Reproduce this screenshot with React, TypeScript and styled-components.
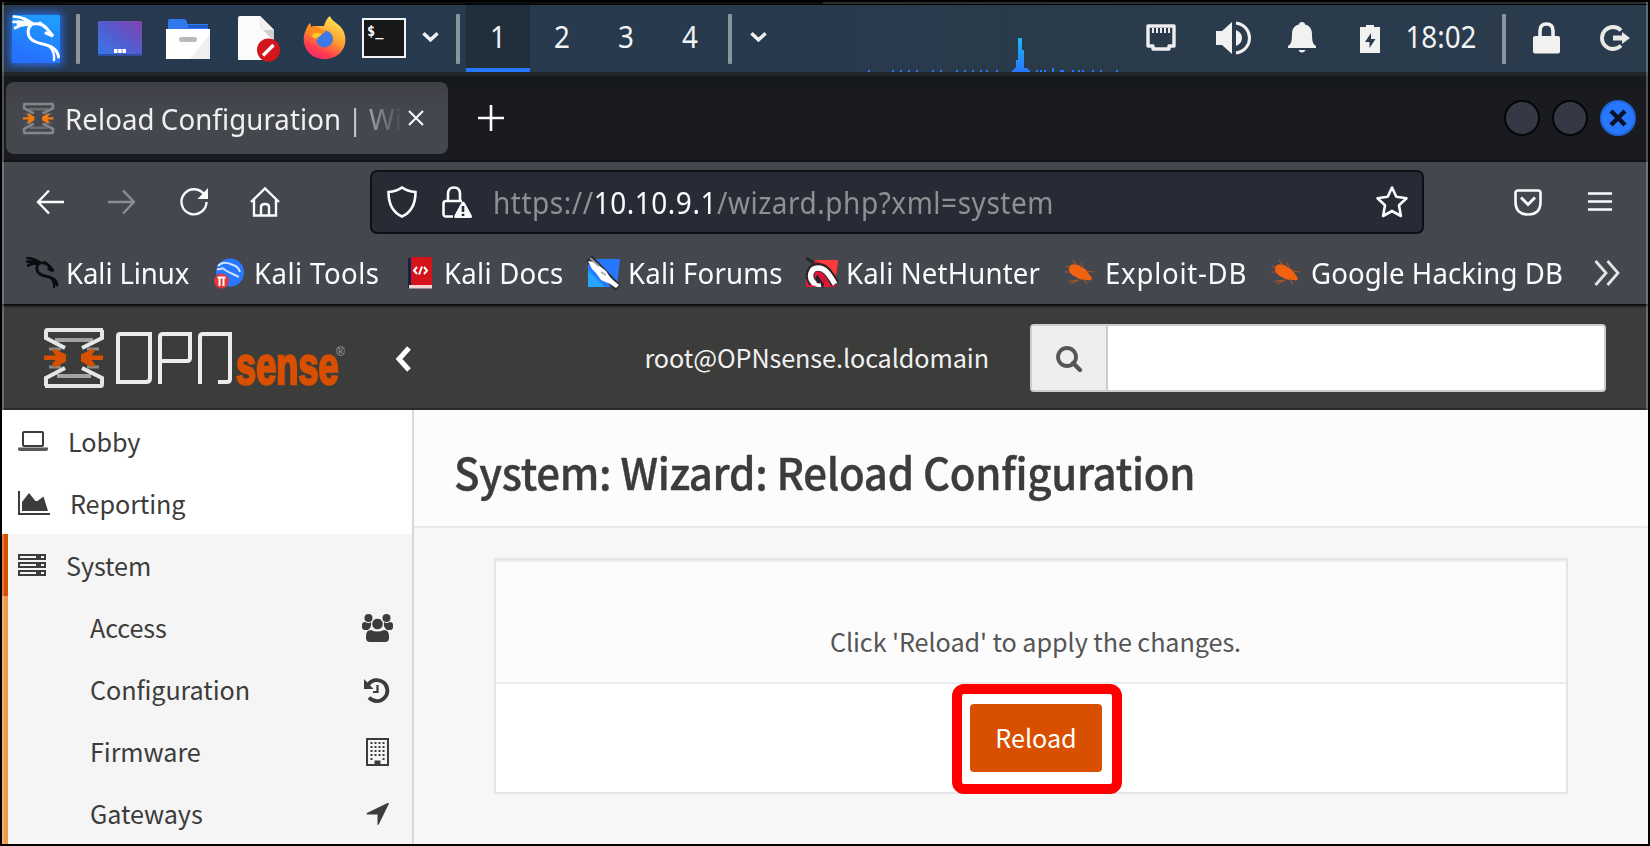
import React from "react";
import styled, { createGlobalStyle } from "styled-components";

const ui = '"Noto Sans", "Open Sans", sans-serif';
const page = '"Noto Sans CJK SC", "Noto Sans", sans-serif';

const Global = createGlobalStyle`
  * { box-sizing: border-box; }
  body { margin: 0; background: #000; overflow: hidden; }
  svg { display: block; flex: none; overflow: visible; }
`;

const Screen = styled.div`
  position: relative;
  width: 1650px;
  height: 846px;
  padding: 2px;
  background: #000;
  display: flex;
  flex-direction: column;
  font-family: ${ui};
`;
const WindowEdges = styled.div`
  position: absolute;
  inset: 2px 2px 2px 2px;
  border: solid rgba(255, 255, 255, 0.24);
  border-width: 0 2px;
  pointer-events: none;
`;
const TopEdge = styled.div`
  height: 2px;
  margin-bottom: 1px;
  flex: none;
  background: linear-gradient(90deg, #0c0d0f 821px, #2b2e30 821px);
`;

/* ---------- desktop panel ---------- */
const Panel = styled.div`
  height: 67px;
  flex: none;
  display: flex;
  align-items: center;
  padding: 0 18px 0 10px;
  background: linear-gradient(90deg, #27394e 0, #273a4e 700px, #293b4b 1000px, #2a3b4d 1646px);
`;
const Slot = styled.div<{ $before: number; $w: number; $lift?: number }>`
  flex: none;
  margin-left: ${(p) => p.$before}px;
  padding-bottom: ${(p) => p.$lift ?? 0}px;
  width: ${(p) => p.$w}px;
  display: flex;
  justify-content: center;
`;
const Divider = styled.i<{ $before: number }>`
  flex: none;
  margin-left: ${(p) => p.$before}px;
  width: 4px;
  height: 50px;
  border-radius: 1px;
  background: #8b959e;
`;
const MenuTile = styled.div`
  width: 48px;
  height: 48px;
  background: linear-gradient(20deg, #2672ff 20%, #1f9dff 90%);
  box-shadow: 0 0 8px 2px #2a6ff0;
`;
const Workspaces = styled.div`
  display: flex;
  flex: none;
  margin-left: 6px;
`;
const Workspace = styled.div<{ $active?: boolean }>`
  flex: none;
  width: 64px;
  height: 67px;
  display: flex;
  align-items: center;
  justify-content: center;
  background: ${(p) => (p.$active ? "#212f3d" : "transparent")};
  box-shadow: ${(p) => (p.$active ? "inset 0 -4px #2777ff" : "none")};
`;
const PanelText = styled.span`
  font-size: 27.8px;
  line-height: 60px;
  color: #f2f3f4;
  white-space: nowrap;
  transform: translateY(-3px) scaleY(1.08);
`;

/* ---------- browser chrome ---------- */
const TabStrip = styled.div`
  height: 90px;
  flex: none;
  display: flex;
  align-items: center;
  padding: 0 12px 2px 4px;
  border-top: 4px solid #212429;
  background: linear-gradient(#15181c, #1a1b20 30%, #1a1b20);
  box-shadow: inset 0 -2px #111216;
`;
const Tab = styled.div`
  width: 442px;
  height: 72px;
  padding-left: 17px;
  display: flex;
  align-items: center;
  border-radius: 8px;
  background: linear-gradient(#3f4046, #45474e 40%);
`;
const TabTitle = styled.span`
  width: 343px;
  margin-left: 11px;
  overflow: hidden;
  white-space: nowrap;
  font-size: 27.6px;
  line-height: 60px;
  letter-spacing: 0.1px;
  word-spacing: -1px;
  color: #f0f0f1;
  transform: scaleY(1.08);
  mask-image: linear-gradient(90deg, #000 275px, transparent 338px);
`;
const Spacer = styled.div`
  flex: 1;
`;
const WindowDot = styled.div<{ $close?: boolean }>`
  flex: none;
  width: 36px;
  height: 36px;
  margin-left: 12px;
  border-radius: 50%;
  display: flex;
  align-items: center;
  justify-content: center;
  border: 2px solid ${(p) => (p.$close ? "#2065d8" : "#050608")};
  background: ${(p) => (p.$close ? "#2777ff" : "#363845")};
`;
const NavBar = styled.div`
  height: 80px;
  flex: none;
  display: flex;
  align-items: center;
  padding-left: 2px;
  background: #44474e;
`;
const UrlBar = styled.div`
  width: 1054px;
  height: 64px;
  margin-left: 90px;
  padding: 0 14px 0 15px;
  display: flex;
  align-items: center;
  border: 2px solid #0e0f13;
  border-radius: 7px;
  background: #282a35;
`;
const Url = styled.span`
  margin-left: 21px;
  font-size: 28px;
  line-height: 56px;
  letter-spacing: 0.52px;
  color: #8f9093;
  white-space: nowrap;
  transform: scaleY(1.08);
  b { font-weight: 400; color: #fbfbfe; }
`;
const Bookmarks = styled.div`
  height: 64px;
  flex: none;
  display: flex;
  align-items: center;
  padding: 0 0 2px 24px;
  background: #44474e;
  border-bottom: 2px solid #0f1013;
`;
const Bookmark = styled.div<{ $w: number }>`
  flex: none;
  width: ${(p) => p.$w}px;
  display: flex;
  align-items: center;
`;
const BookmarkIcon = styled.div<{ $w: number }>`
  flex: none;
  width: ${(p) => p.$w}px;
  padding-top: 2px;
`;
const BookmarkText = styled.span<{ $ls?: number }>`
  font-size: 27.6px;
  line-height: 50px;
  letter-spacing: ${(p) => p.$ls ?? 0}px;
  color: #fbfbfe;
  white-space: nowrap;
  transform: scaleY(1.08);
`;

/* ---------- OPNsense page ---------- */
const Site = styled.div`
  flex: 1;
  min-height: 0;
  display: flex;
  flex-direction: column;
  background: #f7f7f7;
  font-family: ${page};
  color: #3c3c3b;
`;
const SiteHeader = styled.header`
  height: 104px;
  flex: none;
  display: flex;
  align-items: center;
  padding: 0 42px 0 42px;
  background: #3c3c3b;
  border-top: 2px solid #2f2f2f;
  border-bottom: 2px solid #2b2a2b;
`;
const Brand = styled.div`
  display: flex;
  align-items: flex-end;
  height: 60px;
`;
const BrandWord = styled.span`
  width: 100px;
  height: 60px;
  margin-left: 4px;
  font: 700 51px/77px "Liberation Sans", sans-serif;
  color: #d94f00;
  -webkit-text-stroke: 2.6px #d94f00;
  transform: scaleX(0.71);
  transform-origin: left;
`;
const Registered = styled.span`
  align-self: flex-start;
  width: 10px;
  margin: 18px 0 0 0;
  font: 12px/12px "Liberation Sans", sans-serif;
  color: #a5a5a4;
`;
const UserName = styled.span`
  font-size: 25.2px;
  line-height: 40px;
  margin-bottom: 2px;
  letter-spacing: -0.08px;
  color: #f1f1f1;
  white-space: nowrap;
`;
const Search = styled.div`
  width: 576px;
  height: 68px;
  margin-left: 41px;
  display: flex;
  border: 2px solid #ccc;
  border-radius: 4px;
  background: #fff;
`;
const SearchAddon = styled.div`
  width: 76px;
  display: flex;
  align-items: center;
  justify-content: center;
  padding-top: 2px;
  background: #eee;
  border-right: 2px solid #ccc;
`;
const Body = styled.div`
  flex: 1;
  min-height: 0;
  display: flex;
`;
const Sidebar = styled.nav`
  width: 412px;
  flex: none;
  background: #fff;
  border-right: 2px solid #d9d9d9;
  overflow: hidden;
`;
const MenuItem = styled.div<{ $state?: "open" | "sub"; $gap?: number }>`
  height: 62px;
  display: flex;
  align-items: center;
  padding-right: ${(p) => (p.$state === "sub" ? 19 : 0)}px;
  padding-left: ${(p) => (p.$state === "sub" ? 82 : p.$state ? 10 : 16)}px;
  border-left: ${(p) => (p.$state ? 6 : 0)}px solid ${(p) => (p.$state === "open" ? "#d94f00" : "#f0984c")};
  background: ${(p) => (p.$state ? "#f5f5f5" : "#fff")};
  justify-content: ${(p) => (p.$state === "sub" ? "space-between" : "flex-start")};
  gap: ${(p) => p.$gap ?? 0}px;
`;
const MenuText = styled.span`
  font-size: 25.2px;
  line-height: 40px;
  letter-spacing: -0.1px;
  white-space: nowrap;
`;
const MenuGlyph = styled.div`
  width: 32px;
  padding-top: 2px;
  display: flex;
  justify-content: center;
`;
const Content = styled.main`
  flex: 1;
  min-width: 0;
`;
const PageHead = styled.div`
  height: 118px;
  padding: 6px 40px 0;
  display: flex;
  align-items: center;
  background: #fcfcfc;
  border-bottom: 2px solid #e8e8e8;
`;
const Title = styled.h1`
  margin: 0;
  font-size: 42px;
  line-height: 60px;
  font-weight: 500;
  letter-spacing: -0.31px;
  -webkit-text-stroke: 0.4px #3c3c3b;
  white-space: nowrap;
  transform: scaleY(1.03);
`;
const Card = styled.section`
  width: 1074px;
  height: 236px;
  margin: 30px 0 0 80px;
  border: 2px solid #e5e5e5;
  background: #fff;
`;
const CardMessage = styled.div`
  height: 124px;
  display: flex;
  justify-content: center;
  padding: 59px 0 0 9px;
  border-top: 2px solid #efefef;
  border-bottom: 2px solid #ebebeb;
  background: #fcfcfc;
`;
const Message = styled.span`
  font-size: 25.2px;
  line-height: 40px;
  letter-spacing: -0.07px;
  color: #555;
  white-space: nowrap;
`;
const CardActions = styled.div`
  display: flex;
  justify-content: center;
  padding-left: 12px;
`;
const Highlight = styled.div`
  width: 170px;
  height: 110px;
  padding: 0 2px 2px 0;
  border: 10px solid #f00;
  border-radius: 12px;
  display: flex;
  align-items: center;
  justify-content: center;
`;
const ReloadButton = styled.button`
  width: 132px;
  height: 68px;
  padding: 0 0 2px;
  border: 0;
  border-radius: 4px;
  background: #d94f00;
  color: #fff;
  font: 25.2px/64px ${page};
`;

/* ---------- drawings ---------- */
const Dragon = ({ size, color, w = 3 }: { size: number; color: string; w?: number }) => (
  <svg width={size} height={size} viewBox="0 0 48 48" fill="none" stroke={color} strokeWidth={w} strokeLinecap="round">
    <path d="M2 1.5C9 2 15 4 20 8M1.500 7C8 6 14 7 19 9M3 13c5-3 10-4 16-3M10 3l10 5M6 9l13 0" strokeWidth={w * 0.9} />
    <path d="M20 9c-5 4-5 11-1 15 6 6 16 4 22 9 3 2 5 5 5.500 9" />
    <path d="M37 31c4 4 6 8 5 14" strokeWidth={w * 0.8} />
    <path d="M20 9c8-1 13 1 16 6l5 6-7-3M28 8l6 5" />
  </svg>
);

const Chevron = ({ w, h }: { w: number; h: number }) => (
  <svg width={w} height={h} viewBox="0 0 18 11" fill="none" stroke="#f0f0f0" strokeWidth="3.600">
    <path d="M1.500 1 9 8l7.500-7" />
  </svg>
);

const DesktopIcon = () => (
  <svg width="44" height="35" viewBox="0 0 44 35">
    <defs>
      <linearGradient id="desk" x1="0" y1="1" x2="1" y2="0">
        <stop offset="0.1" stopColor="#3b74e6" /><stop offset="0.550" stopColor="#5759cc" /><stop offset="1" stopColor="#8444ae" />
      </linearGradient>
    </defs>
    <rect width="44" height="35" rx="1.500" fill="url(#desk)" />
    <path d="M0 34h44" stroke="#2f4f9e" strokeWidth="2" />
    <path d="M16 30h12" stroke="#fff" strokeWidth="4" strokeDasharray="3.500 .7" />
  </svg>
);

const FolderIcon = () => (
  <svg width="44" height="40" viewBox="0 0 44 40">
    <path d="M2 2q0-2 2-2h14q2 0 2.500 2l1 3H42v8H2z" fill="#2f78ee" />
    <path d="M22 6h20v3H22z" fill="#1d5cc8" />
    <path d="M0 10h44v30H0z" fill="#fff" />
    <path d="M44 15v25H24z" fill="#efefef" />
    <rect x="13" y="18" width="18" height="5" rx="2.500" fill="#b9b9b9" />
  </svg>
);

const EditorIcon = () => (
  <svg width="42" height="46" viewBox="0 0 42 46">
    <path d="M2 0h20l14 14v30H0V2q0-2 2-2z" fill="#fbfbfb" />
    <path d="M22 0l14 14v11L23 12z" fill="#cfcfcf" />
    <path d="M22 0l14 14H24z" fill="#f2f2f2" />
    <circle cx="30.500" cy="34" r="11.500" fill="#d4151b" />
    <path d="M25 39.500 35.500 29" stroke="#fff" strokeWidth="3.400" />
  </svg>
);

const FirefoxIcon = () => (
  <svg width="44" height="44" viewBox="0 0 44 44">
    <defs>
      <linearGradient id="fx" x1="0.800" y1="0" x2="0.300" y2="1">
        <stop offset="0.100" stopColor="#ffdf4f" /><stop offset="0.500" stopColor="#ff9a2e" /><stop offset="0.800" stopColor="#ff3f4d" /><stop offset="1" stopColor="#f02a6b" />
      </linearGradient>
    </defs>
    <path d="M27 0c1 5 10 8 13 14 4 8 3 17-3 23-8 8-22 8-30 1C0 31-1 21 3 14c1-3 2-5 4-7l1 4c2-1 5-1 7-1l6 0C22 6 24 2 27 0z" fill="url(#fx)" />
    <circle cx="21.500" cy="23" r="8.500" fill="#3f78e8" />
    <path d="M7 7l1 4c3-1 6-1 8 1 2 2 4 3 7 3-1 3-7 3-8 5-1 2 0 4 0 4-5-1-9-5-11-10z" fill="#ff8a1c" />
    <path d="M9 20c2 3 6 3 10-2-3-1-6-2-9 0z" fill="#ffc62e" />
  </svg>
);

const TerminalBox = styled.div`
  width: 44px;
  height: 40px;
  padding: 3px 3px;
  border: 2px solid #f4f4f4;
  background: #171819;
  font: 700 13.5px/16px "DejaVu Sans Mono", monospace;
  color: #fff;
`;

const cpuDots = [868, 892, 900, 908, 916, 932, 940, 956, 964, 972, 980, 986, 996, 1036, 1040, 1044, 1060, 1062, 1072, 1078, 1082, 1092, 1100, 1116];
const CpuGraph = () => (
  <svg width="252" height="67" viewBox="868 0 252 67">
    <defs>
      <linearGradient id="cpu" x1="0" y1="33" x2="0" y2="67" gradientUnits="userSpaceOnUse">
        <stop offset="0" stopColor="#19b8f5" /><stop offset="1" stopColor="#2777ff" />
      </linearGradient>
    </defs>
    {cpuDots.map((x) => <path key={x} d={`M${x} 65h2v2h-2z`} fill="#2777ff" />)}
    <path d="M1052 63h2v4h-2zM1012 67v-2h2v-2h2v-8h2v-22h4v12h2v18h4v2h2v2z" fill="url(#cpu)" />
  </svg>
);

const NetworkIcon = () => (
  <svg width="30" height="28" viewBox="0 0 30 28">
    <path d="M2 2h26v20h-5v3H7v-3H2z" fill="none" stroke="#eee" strokeWidth="3.400" strokeLinejoin="round" />
    <path d="M6 6.500h18" stroke="#eee" strokeWidth="5" strokeDasharray="2 2" />
  </svg>
);
const VolumeIcon = () => (
  <svg width="36" height="34" viewBox="0 0 36 34" fill="none" stroke="#f1f1f0">
    <path d="M0 10h6L16 1v32L6 24H0z" fill="#f1f1f0" stroke="none" />
    <path d="M20 9c8 3 8 13 0 16z" fill="#f1f1f0" stroke="none" />
    <path d="M20 2c18 3 18 27 0 30" strokeWidth="3" />
  </svg>
);
const BellIcon = () => (
  <svg width="28" height="31" viewBox="0 0 28 31" fill="#f1f1f0">
    <path d="M14 0c2 0 3 1 3 2.500 5 1 7 5 7 9.500 0 8 1 10 4 12v2H0v-2c3-2 4-4 4-12 0-4.500 2-8.500 7-9.500C11 1 12 0 14 0zM10.500 28h7q-1 2.500-3.500 2.500T10.500 28z" />
  </svg>
);
const BatteryIcon = () => (
  <svg width="20" height="28" viewBox="0 0 20 28">
    <path d="M6 0h8v2h6v26H0V2h6z" fill="#f1f1f0" />
    <path d="M11 8 5 17h4.500v6L15.500 14H11z" fill="#293b4c" />
  </svg>
);
const PanelLock = () => (
  <svg width="27" height="32" viewBox="0 0 27 32">
    <path d="M7 15V9q0-7 6.500-7T20 9v6" fill="none" stroke="#f1f1f0" strokeWidth="3.600" />
    <rect y="14" width="27" height="17.500" rx="2" fill="#f1f1f0" />
  </svg>
);
const LogoutIcon = () => (
  <svg width="30" height="28" viewBox="0 0 30 28">
    <path d="M21 6.500a11 11 0 1 0 0 15" fill="none" stroke="#e9e9e8" strokeWidth="3.800" />
    <path d="M13 11.500h9V8l8 6-8 6v-3.500h-9z" fill="#e9e9e8" />
  </svg>
);

const Hourglass = ({ size, line, arrow, w }: { size: number; line: string; arrow: string; w: number }) => (
  <svg width={size} height={size} viewBox="0 0 60 60" fill="none" stroke={line} strokeWidth={w}>
    <path d="M59 2H3Q2 2 2 4v6l19 10M58 2v8L38 20M1 58h56q1 0 1-2v-6L38 40M2 58v-8l19-10" />
    <path d="M11 12h38M13 48h34" opacity=".6" />
    <path d="M5 21h12M43 21h12M5 39h12M43 39h12" opacity=".45" strokeWidth={w * 0.7} />
    <path d="M0 27.500h11.500L8 22.500l2-2 12 6v7l-11 6-3-3 3.500-4.500H0zM59 27.500H47.500l3.500-5-2-2-12 6v7l11 6 3-3-3.500-4.500H59z" fill={arrow} stroke="none" />
  </svg>
);
const OpnLetters = () => (
  <svg width="116" height="60" viewBox="0 0 116 60" fill="none" stroke="#ececec" strokeWidth="4">
    <path d="M3 6h31v44q0 4-4 4H2V8q0-2 2-2z" />
    <path d="M44 56V9q0-3 3-3h27v24q0 3-3 3H45" />
    <path d="M84 56V9q0-3 3-3h27v45q0 3-3 3h-9" />
  </svg>
);

const line = { fill: "none", stroke: "#fbfbfe", strokeWidth: 2.4 } as const;

const BackIcon = ({ dim }: { dim?: boolean }) => (
  <svg width="28" height="26" viewBox="0 0 28 26" {...line} stroke={dim ? "#8b8d92" : "#fbfbfe"} transform={dim ? "scale(-1 1)" : undefined}>
    <path d="M2 13h26M13 1.500 2 13l11 11.500" />
  </svg>
);
const ReloadIcon = () => (
  <svg width="28" height="28" viewBox="0 0 28 28" {...line}>
    <path d="M24.500 7A12.500 12.500 0 1 0 26.500 14" />
    <path d="M28 0v11H17.500z" fill="#fbfbfe" stroke="none" />
  </svg>
);
const HomeIcon = () => (
  <svg width="30" height="30" viewBox="0 0 30 30" {...line}>
    <path d="M1 15 15 1.500 29 15M4 12.500V28.500h22V12.500M11 28v-8q0-3 4-3t4 3v8" />
  </svg>
);
const ShieldIcon = () => (
  <svg width="30" height="32" viewBox="0 0 30 32" {...line} strokeWidth="2.600">
    <path d="M15 1.500c4 3 8 4 13.500 4.500C28.500 18 25 26 15 30.500 5 26 1.500 18 1.500 6 7 5.500 11 4.500 15 1.500z" />
  </svg>
);
const InsecureLock = () => (
  <svg width="30" height="32" viewBox="0 0 30 32" {...line} strokeWidth="2.600">
    <path d="M6 15V8q0-6.500 6-6.500T18 8v7M11 30.500H4q-2.500 0-2.500-2.500V17.500Q1.500 15 4 15h16" />
    <path d="M21 15.500q1.200 0 2 1.500l7 13q.500 2-1.500 2h-15q-2 0-1.300-2l7-13q.800-1.500 1.800-1.500z" fill="#fbfbfe" stroke="none" />
    <path d="M21 20v6M21 27.800v2.200" stroke="#282a35" />
  </svg>
);
const StarIcon = () => (
  <svg width="32" height="32" viewBox="0 0 32 32" {...line} strokeWidth="2.600" strokeLinejoin="round">
    <path d="M16 1.500l4.300 9.300 10.200 1.400-7.500 7 1.900 10.800L16 25l-8.900 5L9 19.200l-7.500-7 10.200-1.400z" />
  </svg>
);
const PocketIcon = () => (
  <svg width="28" height="27" viewBox="0 0 28 27" {...line} strokeWidth="2.600">
    <path d="M4 1.500h20q2.500 0 2.500 2.500v9q0 12.500-12.500 12.500T1.500 13V4Q1.500 1.500 4 1.500z" />
    <path d="M7 8.500l7 7 7-7" strokeWidth="3" />
  </svg>
);
const MenuIcon = () => (
  <svg width="24" height="20" viewBox="0 0 24 20" {...line} strokeWidth="2.600">
    <path d="M0 1.500h24M0 9.500h24M0 17.500h24" />
  </svg>
);

const ToolsIcon = () => (
  <svg width="30" height="32" viewBox="0 0 30 32">
    <circle cx="16" cy="15.500" r="14" fill="#2777ff" />
    <path d="M4 9c5-5 10-3 15-1 4 1 6 4 7 7M9 11c3 4 9 5 16 9M3 12c3 1 4 0 6-1" fill="none" stroke="#cfe3ff" strokeWidth="2" />
    <circle cx="7.500" cy="24" r="7.500" fill="#e2383c" />
    <path d="M3.500 20.500h8M5.500 21v8M9.500 21v8" stroke="#fff" strokeWidth="2" />
  </svg>
);
const DocsIcon = () => (
  <svg width="25" height="32" viewBox="0 0 25 32">
    <path d="M0 1h4v30H0z" fill="#122348" />
    <path d="M3 0h19q2 0 2 2v26H3z" fill="#d4131a" />
    <path d="M1 28h23v3.500H1z" fill="#f0d5d5" />
    <path d="M9 10l-3 3.500L9 17M16 10l3 3.500-3 3.500M14 9.500l-3 8" fill="none" stroke="#fff" strokeWidth="2" />
  </svg>
);
const ForumsIcon = () => (
  <svg width="32" height="32" viewBox="0 0 32 32">
    <path d="M8 2h24L29 30H0V8z" fill="#2777ff" />
    <path d="M0 13l17 17H0z" fill="#25a4ff" />
    <path d="M1 1 30 31" stroke="#2a2c30" strokeWidth="8" />
    <path d="M0 4l6 1 7 5 5 4 4 6 4 4 5 4-3 3-6-4-9-4-5-7-4-4z" fill="#fff" />
    <path d="M2 1l9 8" stroke="#999" strokeWidth="2" />
    <path d="M13 15l5 3" stroke="#aaa" strokeWidth="1.500" />
  </svg>
);
const NetHunterIcon = () => (
  <svg width="32" height="32" viewBox="0 0 32 32">
    <path d="M9 3h23l-3 27H0V20z" fill="#e31b3b" />
    <path d="M10 3h22l-2 15z" fill="#ff3a3a" />
    <path d="M0 1l8 5" stroke="#26282c" strokeWidth="3" />
    <path d="M7 26C1 18 5 10 12 10c8 0 12 8 17 17" fill="none" stroke="#2a2226" strokeWidth="8.500" />
    <path d="M14 20c-2 2-1 6 4 7" fill="none" stroke="#2a2226" strokeWidth="7" />
    <path d="M9 27C1 20 5 11 12 11c8 0 12 8 17 16" fill="none" stroke="#fff" strokeWidth="5.500" />
    <path d="M7 25q3 4 8 3" fill="none" stroke="#fff" strokeWidth="3.500" />
    <path d="M13 15q6 3 9 11l-4 1-6-8z" fill="#d21436" />
  </svg>
);
const BugIcon = () => (
  <svg width="30" height="26" viewBox="0 0 30 26">
    <path d="M4 7c3-4 9-3 12 0 4 1 6 4 8 7l3 4c0 2-2 3-4 2-4 0-8 0-12-3-5-2-8-6-7-10z" fill="#f0620f" />
    <path d="M0 12h5M8 0l3 5M16 3l2 5M22 11l7 1M3 22c4-2 7-1 10-2M6 24l8-4M19 19l3 5M1 6l4 2" stroke="#a5552a" strokeWidth="1.200" fill="none" />
  </svg>
);
const OverflowIcon = () => (
  <svg width="26" height="26" viewBox="0 0 26 26" {...line} strokeWidth="2.800" stroke="#e3e4e6">
    <path d="M1.500 2 12 14 1.500 26M13.500 2 24 14 13.500 26" />
  </svg>
);

const ink = "#3c3c3b";
const LaptopIcon = () => (
  <svg width="30" height="20" viewBox="0 0 30 20">
    <path d="M6 1h18q1 0 1 1v12q0 1-1 1H6q-1 0-1-1V2q0-1 1-1z" fill="none" stroke={ink} strokeWidth="2" />
    <path d="M0 16.500h30v1.500q0 2-3 2H3q-3 0-3-2z" fill={ink} opacity=".85" />
  </svg>
);
const ChartIcon = () => (
  <svg width="32" height="24" viewBox="0 0 32 24" fill={ink}>
    <path d="M0 0h2v22h30v2H0z" />
    <path d="M4 20V11l7-9 6.500 8h2l6-4.500L30 20z" />
  </svg>
);
const ServerIcon = () => (
  <svg width="28" height="22" viewBox="0 0 28 22" fill="none" stroke={ink} strokeWidth="2">
    <path d="M1 1h26v4H1zM1 9h26v4H1zM1 17h26v4H1z" />
    <path d="M18 3h5M18 11h5M18 19h5" strokeWidth="3.500" />
  </svg>
);
const UsersIcon = () => (
  <svg width="31" height="28" viewBox="0 0 31 28" fill={ink}>
    <circle cx="6.500" cy="4" r="4" /><circle cx="24.500" cy="4" r="4" />
    <path d="M0 11q0-3 3-3 4 2 6 0 .500 4-1 6L6 16H3q-3 0-3-3zM31 11q0-3-3-3-4 2-6 0-.500 4 1 6l2 2h3q3 0 3-3z" />
    <circle cx="15.500" cy="10" r="5.800" stroke="#f5f5f5" strokeWidth="1" />
    <path d="M4 22q0-6 5-6 6 3 13 0 5 0 5 6v2q0 4-4 4H8q-4 0-4-4z" />
  </svg>
);
const HistoryIcon = () => (
  <svg width="26" height="25" viewBox="0 0 26 25" fill="none" stroke={ink}>
    <path d="M4 7A10.500 10.500 0 1 1 5 19.500" strokeWidth="3.800" />
    <path d="M0 1v10h9.500z" fill={ink} stroke="none" />
    <path d="M13.500 7v7H9" strokeWidth="2.200" />
  </svg>
);
const BuildingIcon = () => (
  <svg width="23" height="28" viewBox="0 0 23 28" fill="none" stroke={ink}>
    <path d="M1 1h21v26H1z" strokeWidth="2" />
    <path d="M4.500 5h15M4.500 9h15M4.500 13h15M4.500 17h15M4.500 21h4M16.500 21h4" strokeWidth="2" strokeDasharray="2 2" />
    <path d="M8.500 22.500h6V27h-6z" fill={ink} stroke="none" />
  </svg>
);
const ArrowIcon = () => (
  <svg width="23" height="22" viewBox="0 0 23 22" fill={ink}>
    <path d="M22.500 0q.700.500 0 1.500L13 21q-.500 1-1.500 1V11.500H1Q0 11 1 10L21 .200q1-.500 1.500-.200z" />
  </svg>
);
const SearchIcon = () => (
  <svg width="26" height="26" viewBox="0 0 26 26" fill="none" stroke="#555">
    <circle cx="11" cy="11" r="9" strokeWidth="3.800" />
    <path d="M17 17l7 7" strokeWidth="4.400" strokeLinecap="round" />
  </svg>
);

export default function App() {
  return (
    <Screen>
      <Global />
      <TopEdge />
      <Panel>
        <MenuTile><Dragon size={48} color="#fff" /></MenuTile>
        <Divider $before={16} />
        <Slot $before={18} $w={44}><DesktopIcon /></Slot>
        <Slot $before={24} $w={44}><FolderIcon /></Slot>
        <Slot $before={28} $w={42}><EditorIcon /></Slot>
        <Slot $before={23} $w={44} $lift={1}><FirefoxIcon /></Slot>
        <Slot $before={15} $w={44} $lift={1}><TerminalBox>$_</TerminalBox></Slot>
        <Slot $before={15} $w={18} $lift={2}><Chevron w={17} h={11} /></Slot>
        <Divider $before={17} />
        <Workspaces>
          <Workspace $active><PanelText>1</PanelText></Workspace>
          <Workspace><PanelText>2</PanelText></Workspace>
          <Workspace><PanelText>3</PanelText></Workspace>
          <Workspace><PanelText>4</PanelText></Workspace>
        </Workspaces>
        <Divider $before={6} />
        <Slot $before={17} $w={18} $lift={2}><Chevron w={17} h={11} /></Slot>
        <Slot $before={101} $w={252}><CpuGraph /></Slot>
        <Slot $before={26} $w={30} $lift={2}><NetworkIcon /></Slot>
        <Slot $before={40} $w={36} $lift={1}><VolumeIcon /></Slot>
        <Slot $before={36} $w={28} $lift={3}><BellIcon /></Slot>
        <Slot $before={44} $w={20}><BatteryIcon /></Slot>
        <Slot $before={24} $w={74}><PanelText>18:02</PanelText></Slot>
        <Divider $before={24} />
        <Slot $before={26} $w={28} $lift={1}><PanelLock /></Slot>
        <Slot $before={40} $w={30} $lift={1}><LogoutIcon /></Slot>
      </Panel>
      <TabStrip>
        <Tab>
          <Hourglass size={31} line="#85868a" arrow="#f07c12" w={5} />
          <TabTitle>Reload Configuration | Wizard</TabTitle>
          <svg width="16" height="16" viewBox="0 0 16 16" {...line} strokeWidth="2">
            <path d="M1 1l14 14M15 1 1 15" />
          </svg>
        </Tab>
        <Slot $before={30} $w={26}>
          <svg width="26" height="26" viewBox="0 0 26 26" {...line} strokeWidth="2.600"><path d="M0 13h26M13 0v26" /></svg>
        </Slot>
        <Spacer />
        <WindowDot />
        <WindowDot />
        <WindowDot $close>
          <svg width="16" height="16" viewBox="0 0 16 16" stroke="#0a1226" strokeWidth="4.400"><path d="M1 1l14 14M15 1 1 15" /></svg>
        </WindowDot>
      </TabStrip>
      <NavBar>
        <Slot $before={32} $w={28}><BackIcon /></Slot>
        <Slot $before={44} $w={28}><BackIcon dim /></Slot>
        <Slot $before={44} $w={28}><ReloadIcon /></Slot>
        <Slot $before={42} $w={30}><HomeIcon /></Slot>
        <UrlBar>
          <ShieldIcon />
          <Slot $before={25} $w={30}><InsecureLock /></Slot>
          <Url>https://<b>10.10.9.1</b>/wizard.php?xml=system</Url>
          <Spacer />
          <StarIcon />
        </UrlBar>
        <Slot $before={90} $w={28}><PocketIcon /></Slot>
        <Slot $before={46} $w={24}><MenuIcon /></Slot>
      </NavBar>
      <Bookmarks>
        <Bookmark $w={188}><BookmarkIcon $w={40}><Dragon size={32} color="#0b0c0e" w={4.2} /></BookmarkIcon><BookmarkText $ls={-0.1}>Kali Linux</BookmarkText></Bookmark>
        <Bookmark $w={194}><BookmarkIcon $w={40}><ToolsIcon /></BookmarkIcon><BookmarkText $ls={0.42}>Kali Tools</BookmarkText></Bookmark>
        <Bookmark $w={180}><BookmarkIcon $w={36}><DocsIcon /></BookmarkIcon><BookmarkText $ls={0.25}>Kali Docs</BookmarkText></Bookmark>
        <Bookmark $w={218}><BookmarkIcon $w={40}><ForumsIcon /></BookmarkIcon><BookmarkText $ls={0.2}>Kali Forums</BookmarkText></Bookmark>
        <Bookmark $w={259}><BookmarkIcon $w={40}><NetHunterIcon /></BookmarkIcon><BookmarkText $ls={0.15}>Kali NetHunter</BookmarkText></Bookmark>
        <Bookmark $w={206}><BookmarkIcon $w={40}><BugIcon /></BookmarkIcon><BookmarkText $ls={0.74}>Exploit-DB</BookmarkText></Bookmark>
        <Bookmark $w={323}><BookmarkIcon $w={40}><BugIcon /></BookmarkIcon><BookmarkText $ls={0.08}>Google Hacking DB</BookmarkText></Bookmark>
        <OverflowIcon />
      </Bookmarks>
      <Site>
        <SiteHeader>
          <Brand>
            <Hourglass size={60} line="#e4e6e8" arrow="#d94f00" w={4} />
            <Slot $before={12} $w={116}><OpnLetters /></Slot>
            <BrandWord>sense</BrandWord>
            <Registered>®</Registered>
          </Brand>
          <Slot $before={49} $w={16}>
            <svg width="16" height="26" viewBox="0 0 16 26" fill="none" stroke="#fff" strokeWidth="5"><path d="M14 3 4 14l10 11" /></svg>
          </Slot>
          <Spacer />
          <UserName>root@OPNsense.localdomain</UserName>
          <Search><SearchAddon><SearchIcon /></SearchAddon></Search>
        </SiteHeader>
        <Body>
          <Sidebar>
            <MenuItem $gap={20}><LaptopIcon /><MenuText>Lobby</MenuText></MenuItem>
            <MenuItem $gap={20}><ChartIcon /><MenuText>Reporting</MenuText></MenuItem>
            <MenuItem $state="open" $gap={20}><ServerIcon /><MenuText>System</MenuText></MenuItem>
            <MenuItem $state="sub"><MenuText>Access</MenuText><MenuGlyph><UsersIcon /></MenuGlyph></MenuItem>
            <MenuItem $state="sub"><MenuText>Configuration</MenuText><MenuGlyph><HistoryIcon /></MenuGlyph></MenuItem>
            <MenuItem $state="sub"><MenuText>Firmware</MenuText><MenuGlyph><BuildingIcon /></MenuGlyph></MenuItem>
            <MenuItem $state="sub"><MenuText>Gateways</MenuText><MenuGlyph><ArrowIcon /></MenuGlyph></MenuItem>
          </Sidebar>
          <Content>
            <PageHead><Title>System: Wizard: Reload Configuration</Title></PageHead>
            <Card>
              <CardMessage><Message>Click 'Reload' to apply the changes.</Message></CardMessage>
              <CardActions><Highlight><ReloadButton>Reload</ReloadButton></Highlight></CardActions>
            </Card>
          </Content>
        </Body>
      </Site>
      <WindowEdges />
    </Screen>
  );
}
